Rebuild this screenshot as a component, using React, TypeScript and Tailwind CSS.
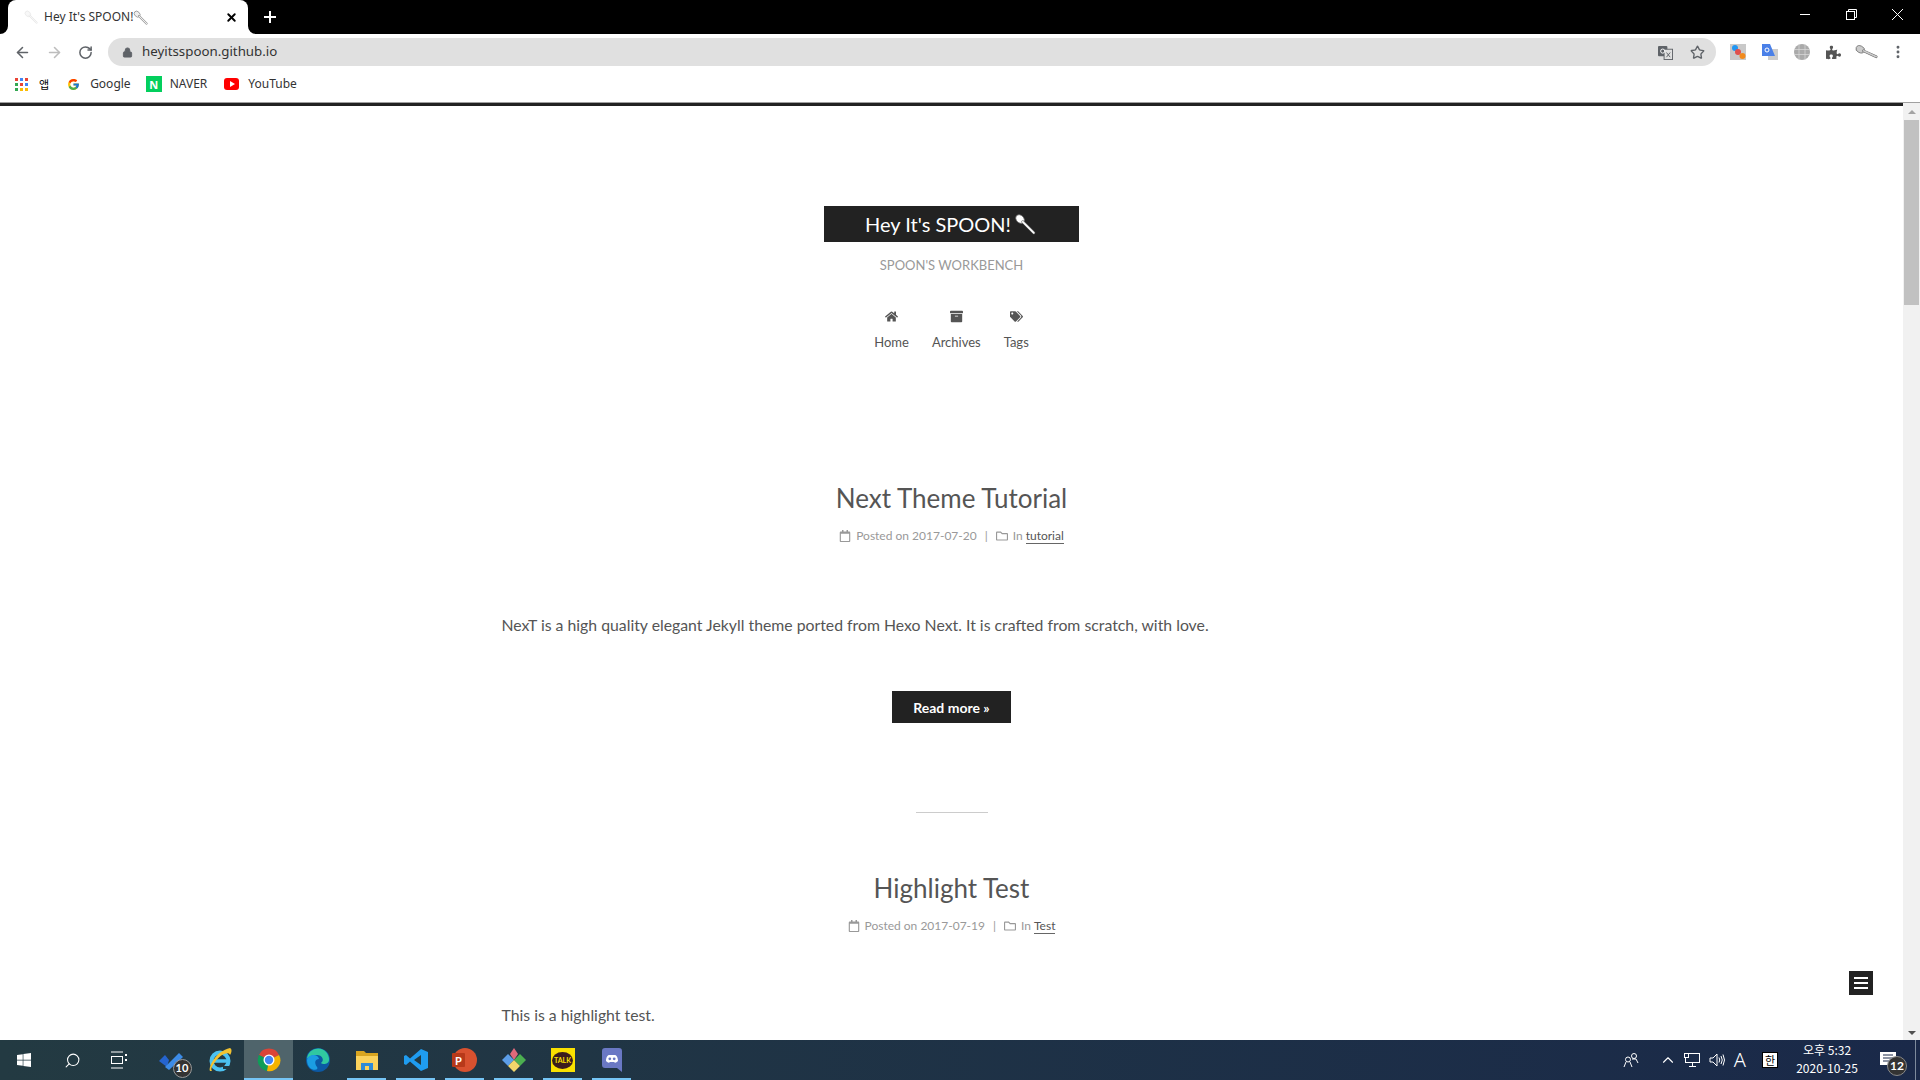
import { ArrowLeft, ArrowRight, ChevronUp, Lock, MoreVertical, RotateCw, Search, Star, X } from "lucide-react"
import { FaArchive, FaHome, FaPuzzlePiece, FaRegCalendar, FaRegFolder, FaTags, FaWindows } from "react-icons/fa"
import { FcGoogle } from "react-icons/fc"

const Spoon = ({ className, color = "#fff" }: { className?: string; color?: string }) => (
  <svg viewBox="0 0 20 20" className={className}>
    <ellipse cx="5.5" cy="5.5" rx="3.4" ry="4.4" transform="rotate(-45 5.5 5.5)" fill={color} stroke="#666" strokeWidth="0.7" />
    <path d="M8 8 L18 18" stroke="#666" strokeWidth="2.6" strokeLinecap="round" />
    <path d="M8 8 L18 18" stroke={color} strokeWidth="1.6" strokeLinecap="round" />
  </svg>
)

const AppsGrid = () => {
  const colors = ["#ea4335", "#4285f4", "#ea4335", "#34a853", "#ea4335", "#4285f4", "#34a853", "#fbbc05", "#fbbc05"]
  return (
    <div className="grid w-[13px] grid-cols-3 gap-[2px]">
      {colors.map((c, i) => (
        <span key={i} className="h-[3px] w-[3px]" style={{ background: c }} />
      ))}
    </div>
  )
}

const TabBar = () => (
  <div className="flex h-[34px] bg-black pl-2">
    <div className="relative flex w-[240px] items-center rounded-t-[8px] bg-white pl-[16px] pr-[10px]">
      <svg viewBox="0 0 8 8" className="absolute -left-2 bottom-0 h-2 w-2">
        <path d="M8 0V8H0A8 8 0 0 0 8 0Z" fill="#fff" />
      </svg>
      <svg viewBox="0 0 8 8" className="absolute -right-2 bottom-0 h-2 w-2">
        <path d="M0 0V8H8A8 8 0 0 1 0 0Z" fill="#fff" />
      </svg>
      <Spoon className="h-[14px] w-[14px] opacity-20" color="#ddd" />
      <span className="ml-[6px] font-['Noto_Sans',sans-serif] text-[12px] text-[#333]">Hey It's SPOON!</span>
      <Spoon className="h-[15px] w-[15px]" color="#eee" />
      <X className="ml-auto h-[13px] w-[13px] text-black" strokeWidth={3.5} />
    </div>
    <div className="ml-[16px] flex items-center text-white">
      <svg viewBox="0 0 12 12" className="h-3 w-3">
        <path d="M6 0V12M0 6H12" stroke="#fff" strokeWidth="2" />
      </svg>
    </div>
    <div className="ml-auto flex h-[28px] items-center text-white">
      <div className="flex w-[46px] justify-center">
        <span className="h-px w-[10px] bg-white" />
      </div>
      <div className="flex w-[46px] justify-center">
        <svg viewBox="0 0 11 11" className="h-[11px] w-[11px]" fill="none" stroke="#fff">
          <rect x="0.5" y="2.5" width="8" height="8" />
          <path d="M2.5 2.5V0.5H10.5V8.5H8.5" />
        </svg>
      </div>
      <div className="flex w-[46px] justify-center">
        <svg viewBox="0 0 11 11" className="h-[11px] w-[11px]" stroke="#fff">
          <path d="M0 0L11 11M11 0L0 11" />
        </svg>
      </div>
    </div>
  </div>
)

const Toolbar = () => (
  <div className="flex h-[34px] items-center bg-white pl-[14px] pt-[2px] text-[#5f6368]">
    <ArrowLeft className="h-[17px] w-[17px]" strokeWidth={2.2} />
    <ArrowRight className="ml-[15px] h-[17px] w-[17px] text-[#bdbdbd]" strokeWidth={2.2} />
    <RotateCw className="ml-[15px] h-[15px] w-[15px]" strokeWidth={2.4} />
    <div className="ml-[15px] flex h-[28px] w-[1608px] items-center rounded-full bg-[#e0e0e0] pl-[14px] pr-[11px]">
      <Lock className="h-[11px] w-[11px] fill-[#5f6368]" />
      <span className="ml-[9px] font-['Noto_Sans',sans-serif] text-[13.3px] text-[#333]">heyitsspoon.github.io</span>
      <svg viewBox="0 0 16 16" className="ml-auto h-[15px] w-[15px]">
        <rect x="0" y="1" width="10" height="11" rx="1" fill="#5f6368" />
        <rect x="6.5" y="4.5" width="9" height="11" fill="#e0e0e0" stroke="#5f6368" />
        <circle cx="5" cy="6.5" r="2.2" fill="none" stroke="#fff" />
        <path d="M9 8L13 13M13 8L9 13" stroke="#5f6368" />
      </svg>
      <Star className="ml-[17px] h-[15px] w-[15px]" strokeWidth={2.2} />
    </div>
    <svg viewBox="0 0 16 16" className="ml-[14px] h-4 w-4">
      <rect width="16" height="16" fill="#c9c9c9" />
      <circle cx="5" cy="4" r="3" fill="#2196f3" />
      <circle cx="8" cy="8" r="3" fill="#e0504c" />
      <circle cx="12.5" cy="12" r="3" fill="#f18a1c" />
    </svg>
    <svg viewBox="0 0 16 16" className="ml-[16px] h-4 w-4">
      <rect x="6" y="5" width="10" height="11" fill="#ccc" />
      <path d="M0 0H8L13 12H0Z" fill="#4a80e8" />
      <circle cx="5" cy="6" r="2" fill="none" stroke="#fff" />
    </svg>
    <svg viewBox="0 0 16 16" className="ml-[16px] h-4 w-4" fill="none">
      <circle cx="8" cy="8" r="8" fill="#aaa" />
      <path d="M0 5.5H16M0 10.5H16M5 0V16M11 0V16" stroke="#ddd" strokeWidth="0.7" />
    </svg>
    <FaPuzzlePiece className="ml-[16px] h-[15px] w-[15px] text-[#555]" />
    <Spoon className="ml-[15px] h-[20px] w-[20px] -rotate-[20deg]" color="#ccc" />
    <MoreVertical className="ml-[14px] h-4 w-4" strokeWidth={2.4} />
  </div>
)

const Bookmarks = () => (
  <div className="flex h-[34px] items-center gap-[6px] bg-white pb-[2px] pl-[15px] font-['Noto_Sans',sans-serif] text-[12px] text-[#333]">
    <AppsGrid />
    <span className="ml-[5px] font-['Noto_Sans_CJK_KR',sans-serif] text-[11px] text-black">앱</span>
    <FcGoogle className="ml-[12px] h-[13px] w-[13px]" />
    <span className="ml-[4px]">Google</span>
    <div className="ml-[9px] flex h-4 w-4 items-center justify-center bg-[#03cf5d] text-[11px] font-bold leading-none text-white">N</div>
    <span className="ml-[2px]">NAVER</span>
    <div className="ml-[11px] flex h-[12px] w-[15px] items-center justify-center rounded-[3px] bg-[#ff0000]">
      <span className="ml-px border-y-[3px] border-l-[5px] border-y-transparent border-l-white" />
    </div>
    <span className="ml-[3px]">YouTube</span>
  </div>
)

const navItems = [
  { label: "Home", Icon: FaHome },
  { label: "Archives", Icon: FaArchive },
  { label: "Tags", Icon: FaTags },
]

const SiteHeader = () => (
  <header className="flex flex-col items-center pt-[100px]">
    <div className="flex h-[36px] w-[255px] items-center justify-center bg-[#222] text-[20px] text-white">
      Hey It's SPOON!
      <Spoon className="ml-[3px] mr-[2px] h-[22px] w-[22px]" />
    </div>
    <p className="mt-[13px] text-[13px] leading-[20px] text-[#999]">SPOON'S WORKBENCH</p>
    <nav className="mt-[35px] flex gap-[23px] text-[13px] text-[#555]">
      {navItems.map(({ label, Icon }) => (
        <div key={label} className="flex flex-col items-center">
          <Icon className="h-[13px] w-[13px]" />
          <span className="mt-[9px] leading-[20px]">{label}</span>
        </div>
      ))}
    </nav>
  </header>
)

const Post = ({ title, date, category, excerpt, more }: { title: string; date: string; category: string; excerpt: string; more?: boolean }) => (
  <article className="flex flex-col items-center">
    <h2 className="text-[26px] leading-[36px] text-[#555]">{title}</h2>
    <div className="mt-[11px] flex items-center text-[12px] leading-[18px] text-[#999]">
      <FaRegCalendar className="h-3 w-3" />
      <span className="ml-[5px]">Posted on {date}</span>
      <span className="mx-[8px]">|</span>
      <FaRegFolder className="h-3 w-3" />
      <span className="ml-[5px]">In</span>
      <a className="ml-[3px] border-b border-[#666] leading-[15px] text-[#555]">{category}</a>
    </div>
    <p className="mt-[66px] w-[900px] text-[15.8px] leading-[28px] text-[#555]">{excerpt}</p>
    {more && (
      <>
        <button className="mt-[52px] flex h-[32px] w-[119px] items-center justify-center bg-[#222] text-[14px] font-bold text-white">
          Read more »
        </button>
        <div className="mb-[57px] mt-[89px] h-px w-[72px] bg-[#ccc]" />
      </>
    )}
  </article>
)

const Scrollbar = () => (
  <div className="flex w-[17px] flex-col items-center bg-[#f1f1f1]">
    <div className="mt-[7px] h-0 w-0 border-x-[4px] border-b-[4px] border-x-transparent border-b-[#a3a3a3]" />
    <div className="mt-[6px] h-[185px] w-[15px] bg-[#c1c1c1]" />
    <div className="mb-[5px] mt-auto h-0 w-0 border-x-[4px] border-t-[4px] border-x-transparent border-t-[#505050]" />
  </div>
)

const Slot = ({ children, active, open }: { children: React.ReactNode; active?: boolean; open?: boolean }) => (
  <div className={`relative flex h-10 w-[49px] items-center justify-center ${active ? "bg-[#4f646b]" : ""}`}>
    {children}
    {(open || active) && <span className={`absolute bottom-0 h-[2px] bg-[#76c5f5] ${active ? "inset-x-0" : "inset-x-[5px]"}`} />}
  </div>
)

const Taskbar = () => (
  <div className="relative flex h-10 items-center bg-gradient-to-r from-[#233a42] to-[#1a2949] pl-0 text-white">
    <div className="-ml-px flex items-center">
      <Slot><FaWindows className="h-4 w-4" /></Slot>
      <Slot><Search className="h-[17px] w-[17px] -scale-x-100" strokeWidth={1.5} /></Slot>
      <Slot>
        <svg viewBox="0 0 16 18" className="-translate-x-[3px] h-[18px] w-4" fill="none" stroke="#fff">
          <path d="M0 1H12M0 17H12" />
          <rect x="0.5" y="5.5" width="11" height="7" />
          <path d="M15 3V5M15 8V10" strokeWidth="2" />
        </svg>
      </Slot>
      <Slot>
        <div className="relative">
          <svg viewBox="0 0 26 20" className="h-5 w-[26px]">
            <path d="M1 11L7 5L11 10L9 17Z" fill="#2564cf" />
            <path d="M7 17L21 3L25 7L11 20Z" fill="#3c8ce8" />
          </svg>
          <span className="absolute -bottom-[8px] -right-[8px] flex h-[19px] w-[19px] items-center justify-center rounded-full border border-[#999] bg-[#333] text-[11px] font-bold">10</span>
        </div>
      </Slot>
      <Slot>
        <svg viewBox="0 0 24 26" className="h-[26px] w-[24px]">
          <circle cx="12" cy="14" r="8.5" fill="none" stroke="#4cc2f1" strokeWidth="4" />
          <path d="M4 14H20" stroke="#4cc2f1" strokeWidth="3.5" />
          <path d="M15 19H24V22H15Z" fill="#233a42" />
          <path d="M2 24C0 20 8 4 22 1C24 2 24 5 22 8C21 4 12 6 5 18C3 21 3 23 4 24Z" fill="#f2c230" />
        </svg>
      </Slot>
      <Slot active>
        <svg viewBox="0 0 24 24" className="h-[24px] w-[24px]">
          <path d="M12 12L2 7A11 11 0 0 1 22 7Z" fill="#db4437" />
          <path d="M12 12L2 7A11 11 0 0 0 10 23Z" fill="#0f9d58" />
          <path d="M12 12L22 7A11 11 0 0 1 10 23Z" fill="#f4b400" />
          <circle cx="12" cy="12" r="5.5" fill="#fff" />
          <circle cx="12" cy="12" r="4.2" fill="#4285f4" />
        </svg>
      </Slot>
      <Slot>
        <svg viewBox="0 0 24 24" className="h-[24px] w-[24px]">
          <circle cx="12" cy="12" r="12" fill="#0c59a4" />
          <path d="M1 11A11 11 0 0 1 23 12C23 16 17 17 15 15C19 12 16 7 11 7C6 7 2 9 1 11Z" fill="#30c8a0" />
          <path d="M1 12C2 6 12 5 13 11C9 11 8 15 11 19C13 22 7 23 4 20C2 18 1 15 1 12Z" fill="#1b9de2" />
        </svg>
      </Slot>
      <Slot open>
        <svg viewBox="0 0 22 20" className="h-5 w-[22px]">
          <path d="M0 1H8L10 3H22V7H0Z" fill="#d9a520" />
          <rect y="6" width="22" height="14" fill="#fbd25c" />
          <rect x="5" y="13" width="12" height="7" fill="#2e8bd8" />
          <rect x="9" y="16" width="4" height="4" fill="#fbd25c" />
        </svg>
      </Slot>
      <Slot open>
        <svg viewBox="0 0 24 24" className="h-6 w-6">
          <path d="M17 1L24 4V20L17 23L6 13.5L2 17L0 16V8L2 7L6 10.5Z" fill="#1f9cf0" />
          <path d="M17 7L10 12L17 17Z" fill="#233a42" />
        </svg>
      </Slot>
      <Slot open>
        <div className="relative h-[24px] w-[25px]">
          <span className="absolute right-0 h-[24px] w-[24px] rounded-full bg-[#d8512f]" />
          <span className="absolute left-0 top-[5px] flex h-[14px] w-[13px] items-center justify-center rounded-[1px] bg-[#b7391a] text-[11px] font-bold leading-none">P</span>
        </div>
      </Slot>
      <Slot open>
        <svg viewBox="0 0 24 24" className="h-[24px] w-[24px]">
          <path d="M12 0L16 6L12 12L8 6Z" fill="#e0697a" />
          <path d="M0 12L6 6L12 12L6 18Z" fill="#5c9ee8" />
          <path d="M12 12L18 6L24 12L18 18Z" fill="#4caf50" />
          <path d="M6 18L12 12L18 18L12 24Z" fill="#f2d66b" />
        </svg>
      </Slot>
      <Slot open>
        <div className="flex h-[24px] w-[24px] items-center justify-center bg-[#fae100]">
          <span className="flex h-[17px] w-[21px] items-center justify-center rounded-[50%] bg-[#3a1d1d] text-[7px] font-bold text-[#fae100]">TALK</span>
        </div>
      </Slot>
      <Slot open>
        <svg viewBox="0 0 20 24" className="h-6 w-5">
          <path d="M3 0H17A3 3 0 0 1 20 3V24L15 20H3A3 3 0 0 1 0 17V3A3 3 0 0 1 3 0Z" fill="#6a78c4" />
          <path d="M4 13C4 9 6 7 7 7H13C14 7 16 9 16 13C14 15 13 15 12 14H8C7 15 6 15 4 13Z" fill="#fff" />
          <circle cx="7.8" cy="10.8" r="1.4" fill="#6a78c4" />
          <circle cx="12.2" cy="10.8" r="1.4" fill="#6a78c4" />
        </svg>
      </Slot>
    </div>
    <div className="ml-auto flex items-center pr-[23px]">
      <svg viewBox="0 0 16 16" className="h-4 w-4" fill="none" stroke="#fff">
        <circle cx="11" cy="4" r="2.5" />
        <circle cx="5" cy="7.5" r="2.5" />
        <path d="M1 15L3 10M7 10L9 15M9 7L13 7L15 11" />
      </svg>
      <ChevronUp className="ml-[20px] h-[18px] w-[18px]" strokeWidth={1.5} />
      <svg viewBox="0 0 16 14" className="ml-[7px] h-[14px] w-4" fill="none" stroke="#fff">
        <rect x="1.5" y="0.5" width="14" height="9" />
        <path d="M8.5 10V13M5 13.5H12" />
        <rect x="0.5" y="0.5" width="4" height="4" fill="#1a2949" />
      </svg>
      <svg viewBox="0 0 16 14" className="ml-[9px] h-[14px] w-4" fill="none" stroke="#fff">
        <path d="M1 5H4L8 1V13L4 9H1Z" />
        <path d="M10 4.5Q11.5 7 10 9.5M12 3Q14.5 7 12 11M14 1.5Q17 7 14 12.5" />
      </svg>
      <span className="ml-[9px] font-['Noto_Sans',sans-serif] text-[20px] font-light leading-none">A</span>
      <span className="ml-[16px] flex h-4 w-4 items-center justify-center border border-black bg-white font-['Noto_Sans_CJK_KR',sans-serif] text-[11px] leading-none text-black">한</span>
      <div className="ml-[15px] flex w-[68px] flex-col items-center pb-[2px] font-['Noto_Sans_CJK_KR',sans-serif] text-[12px] leading-[18px]">
        <span>오후 5:32</span>
        <span>2020-10-25</span>
      </div>
      <div className="relative ml-[19px] h-[17px] w-[17px]">
        <svg viewBox="0 0 16 13" className="h-[13px] w-4" fill="#fff">
          <path d="M0 0H16V13H0Z" />
          <path d="M3 3H13M3 6H13M3 9H10" stroke="#1a2949" />
        </svg>
        <span className="absolute -bottom-[7px] -right-[10px] flex h-[20px] w-[20px] items-center justify-center rounded-full border border-[#888] bg-[#333] text-[12px] font-bold">12</span>
      </div>
    </div>
    <span className="absolute inset-y-0 right-[4px] w-px bg-[#7d8a9c]" />
  </div>
)

export default function App() {
  return (
    <div className="flex h-screen flex-col overflow-hidden bg-white font-['Lato',sans-serif]">
      <TabBar />
      <Toolbar />
      <Bookmarks />
      <div className="h-px bg-[#a0a0a0]" />
      <div className="relative flex min-h-0 flex-1">
        <main className="min-w-0 flex-1 overflow-hidden border-t-[3px] border-[#222]">
          <SiteHeader />
          <section className="mt-[128px]">
            <Post
              title="Next Theme Tutorial"
              date="2017-07-20"
              category="tutorial"
              excerpt="NexT is a high quality elegant Jekyll theme ported from Hexo Next. It is crafted from scratch, with love."
              more
            />
            <Post title="Highlight Test" date="2017-07-19" category="Test" excerpt="This is a highlight test." />
          </section>
        </main>
        <Scrollbar />
        <button className="absolute right-[47px] top-[868px] flex h-6 w-6 items-center justify-center bg-[#222]">
          <svg viewBox="0 0 14 12" className="h-3 w-[14px]" fill="#fff">
            <path d="M0 0H14V2H0ZM0 5H14V7H0ZM0 10H14V12H0Z" />
          </svg>
        </button>
      </div>
      <Taskbar />
    </div>
  )
}
